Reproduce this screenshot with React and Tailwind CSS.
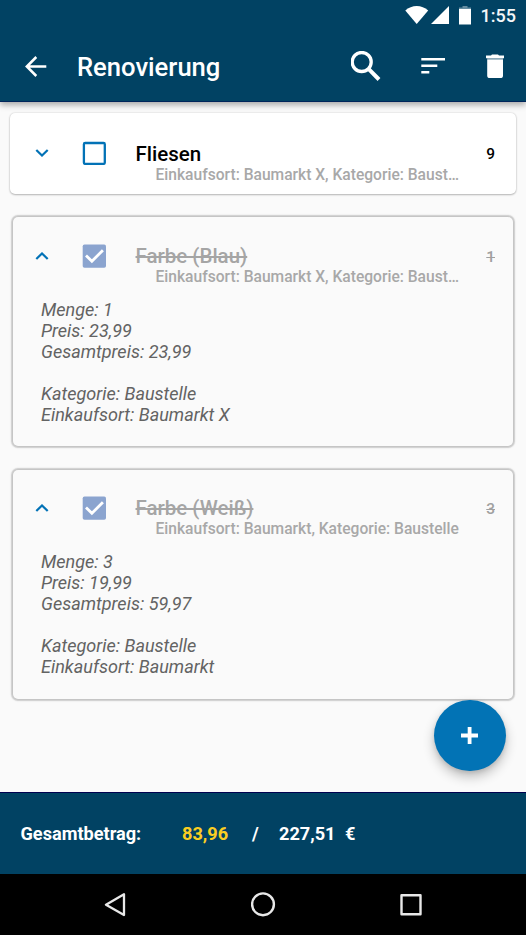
const ITEMS = [
  {
    name: "Fliesen",
    count: "9",
    sub: "Einkaufsort: Baumarkt X, Kategorie: Baust…",
    done: false,
  },
  {
    name: "Farbe (Blau)",
    count: "1",
    sub: "Einkaufsort: Baumarkt X, Kategorie: Baust…",
    done: true,
    facts: ["Menge: 1", "Preis: 23,99", "Gesamtpreis: 23,99"],
    place: ["Kategorie: Baustelle", "Einkaufsort: Baumarkt X"],
  },
  {
    name: "Farbe (Weiß)",
    count: "3",
    sub: "Einkaufsort: Baumarkt, Kategorie: Baustelle",
    done: true,
    facts: ["Menge: 3", "Preis: 19,99", "Gesamtpreis: 59,97"],
    place: ["Kategorie: Baustelle", "Einkaufsort: Baumarkt"],
  },
];

function StatusBar() {
  return (
    <div className="flex h-8 items-start justify-end pr-[10px] pt-[6px]">
      <svg className="mr-[2px] h-[18px] w-6" viewBox="0 0 24 18" fill="#fff">
        <path d="M0.3 4.6C3.5 1.6 7.5 0 11.7 0s8.300 1.600 11.500 4.600L11.700 18z" />
      </svg>
      <svg className="mr-[9px] h-[18px] w-[19px]" viewBox="0 0 19 18" fill="#fff">
        <path d="M18 0v18H0z" />
      </svg>
      <svg className="mr-[9px] h-[19px] w-[13px]" viewBox="0 0 13 19" fill="#fff">
        <path d="M3.500 0h5v1.500h3.500V3H0V1.500h3.500z" opacity="0.4" />
        <path d="M0 3h12V18.500H0z" />
      </svg>
      <span className="text-[18px] font-medium leading-[20px] text-[#f4f7f9]">1:55</span>
    </div>
  );
}

function Header() {
  return (
    <header className="relative z-10 h-[102px] shrink-0 border-b border-[#00255a] bg-[#014263] shadow-[0_3px_6px_rgba(0,0,0,0.32)]">
      <StatusBar />
      <div className="flex h-[68px] items-center pl-[25px] pr-[21px]">
        <svg className="h-[21px] w-[22px]" viewBox="0 0 22 21" fill="none" stroke="#fff" strokeWidth="2.500">
          <path d="M11.300 1L1.800 10.500L11.300 20M2 10.500H21.300" />
        </svg>
        <h1 className="ml-[30px] grow pt-[2px] text-[25.600px] font-medium leading-[30px] text-white">Renovierung</h1>
        <svg className="h-[30px] w-[30px]" viewBox="0 0 30 30" fill="none" stroke="#fff">
          <circle cx="10.700" cy="11" r="9.500" strokeWidth="3.300" />
          <path d="M17.800 18.200L28 28.500" strokeWidth="4" />
        </svg>
        <svg className="ml-10 h-4 w-6" viewBox="0 0 24 16" fill="#fff">
          <path d="M0.300 0H24v2.600H0.300zM0.300 6.500H16.300v2.600H0.300zM0.300 13H8.300v2.600H0.300z" />
        </svg>
        <svg className="ml-10 h-6 w-5" viewBox="0 0 20 24" fill="#fff">
          <path d="M1 1.600h5L7 0.400h6l1 1.200h5V4.200H1z" />
          <path d="M2.200 5.600h15.800V21.400a2.600 2.600 0 0 1-2.600 2.600H4.800A2.600 2.600 0 0 1 2.200 21.400z" />
          <path d="M2.200 4.200h15.800v1.500H2.200z" opacity="0.5" />
        </svg>
      </div>
    </header>
  );
}

function Checkbox({ checked }) {
  return (
    <svg className="h-6 w-6 shrink-0" viewBox="0 0 24 24" fill="none">
      {checked ? (
        <>
          <rect x="0.700" y="0.500" width="23.300" height="23.300" rx="1.800" fill="#8ba4cf" />
          <path d="M4 11.500L9.900 17.300L20.900 6.200" stroke="#fff" strokeWidth="2.800" />
        </>
      ) : (
        <rect x="1.900" y="2" width="20.900" height="20.900" rx="1.300" stroke="#0272b6" strokeWidth="2.300" />
      )}
    </svg>
  );
}

function Chevron({ up }) {
  return (
    <svg className="h-2 w-[14px] shrink-0" viewBox="0 0 14 8" fill="none" stroke="#0272b6" strokeWidth="2.200">
      <path d={up ? "M1.300 7L7 1.500L12.700 7" : "M1.300 1L7 6.500L12.700 1"} />
    </svg>
  );
}

function ItemCard({ item }) {
  const frame = item.done
    ? "mx-[3px] h-[229px] pt-[27px] last:mt-[3px] last:pt-[26px] bg-[#fafafa] shadow-[0_0_1px_2px_rgba(0,0,0,0.13),0_0_3px_1px_rgba(0,0,0,0.14)]"
    : "mt-[1px] mb-[2px] h-[81px] pt-[28px] bg-white shadow-[0_1px_2px_rgba(0,0,0,0.24),0_0_2px_rgba(0,0,0,0.18)]";
  const inset = item.done ? "pl-[22px] pr-[18px]" : "pl-[25px] pr-[21px]";
  return (
    <section className={"rounded-[5px] " + frame}>
      <div className={"flex h-[43px] items-start " + inset}>
        <div className="flex h-6 items-center">
          <Chevron up={item.done} />
        </div>
        <div className="ml-[33px]">
          <Checkbox checked={item.done} />
        </div>
        <div className={"ml-[29.500px] w-[325px] " + (item.done ? "pt-px" : "pt-[2px]")}>
          <h2 className={"text-[20.500px] font-medium leading-[23px] " + (item.done ? "text-[#a5a5a5] line-through" : "text-black")}>
            {item.name}
          </h2>
          <p className="ml-5 whitespace-nowrap text-[15.600px] font-medium leading-[19px] text-[#a8a8a8]">
            {item.sub}
          </p>
        </div>
        <span className={"ml-auto mt-px text-[15.400px] font-medium leading-6 " + (item.done ? "text-[#a0a0a0] line-through" : "text-black")}>
          {item.count}
        </span>
      </div>
      {item.done && (
        <div className="ml-7 mt-[13px] text-[18.050px] italic leading-[20.900px] text-[#636363]">
          {item.facts.map((line) => (
            <p key={line}>{line}</p>
          ))}
          <div className="mt-[21px]">
            {item.place.map((line) => (
              <p key={line}>{line}</p>
            ))}
          </div>
        </div>
      )}
    </section>
  );
}

function NavBar() {
  return (
    <nav className="flex h-[61px] shrink-0 items-center justify-between bg-black pl-[104px] pr-[104px]">
      <svg className="h-6 w-[22px]" viewBox="0 0 22 24" fill="none" stroke="#e8e8e8" strokeWidth="2.300" strokeLinejoin="round">
        <path d="M20 1.300V22.100L2 11.700z" />
      </svg>
      <svg className="h-[25px] w-[25px]" viewBox="0 0 25 25" fill="none" stroke="#e8e8e8" strokeWidth="2.400">
        <circle cx="12" cy="12.300" r="10.900" />
      </svg>
      <svg className="h-[22px] w-[22px]" viewBox="0 0 22 22" fill="none" stroke="#e8e8e8" strokeWidth="2.400" strokeLinejoin="round">
        <rect x="1.500" y="1.200" width="19" height="19" />
      </svg>
    </nav>
  );
}

export default function App() {
  return (
    <div className="relative flex h-[935px] w-[526px] flex-col overflow-hidden bg-[#fafafa] font-['Roboto',sans-serif]">
      <Header />
      <main className="flex grow flex-col gap-[21px] px-[10px] pt-[10px]">
        {ITEMS.map((item) => (
          <ItemCard key={item.name} item={item} />
        ))}
      </main>
      <button
        aria-label="Hinzufügen"
        className="absolute right-[20.500px] top-[699.700px] z-10 flex h-[71.500px] w-[71.500px] items-center justify-center rounded-full bg-[#0273b5] shadow-[0_6px_12px_rgba(0,0,0,0.24),0_2px_4px_rgba(0,0,0,0.1)]"
      >
        <svg className="h-[17px] w-[17px]" viewBox="0 0 17 17" stroke="#fff" strokeWidth="3.800">
          <path d="M8.600 0V17M0 8.500H17" />
        </svg>
      </button>
      <footer className="relative z-20 flex h-[82px] shrink-0 items-center border-t border-[#00004f] bg-[#014263] pl-[20.500px] text-[18.150px] font-bold leading-[21px] text-white">
        <span className="w-[161.500px]">Gesamtbetrag:</span>
        <span className="w-[70px] text-[#fbce22]">83,96</span>
        <span className="w-[27px]">/</span>
        <span className="w-[66px]">227,51</span>
        <span>€</span>
      </footer>
      <NavBar />
    </div>
  );
}
